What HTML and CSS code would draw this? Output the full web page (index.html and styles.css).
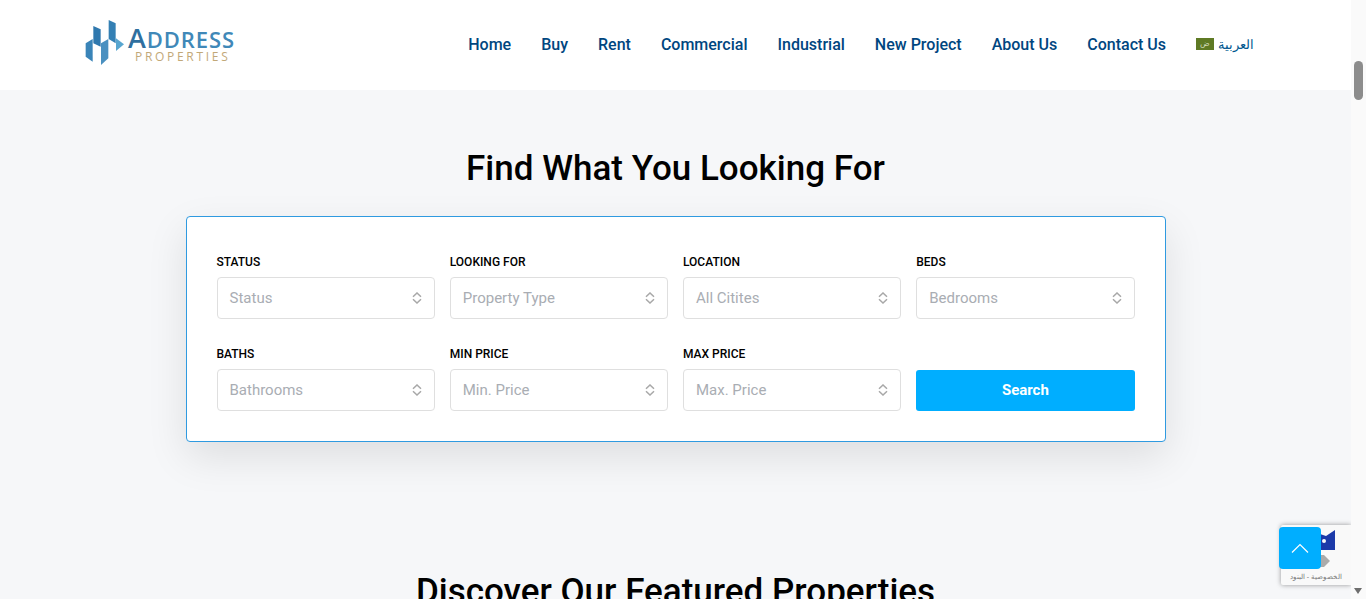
FILE: index.html
```html
<!DOCTYPE html>
<html lang="en">
<head>
    <meta charset="UTF-8">
    <meta name="viewport" content="width=device-width, initial-scale=1.0">
    <title>Address Properties</title>
    <link rel="stylesheet" href="styles.css">
</head>
<body>
    <div class="page">
        <header class="header">
            <a class="logo" href="#">
                <svg class="logo-mark" width="50" height="55" viewBox="0 0 150 165">
                    <polygon points="17,85 38,72 38,140 17,125" fill="#3a84b8"/>
                    <polygon points="40,33 62,43 62,95 40,85" fill="#2f78ae"/>
                    <polygon points="63,85 85,72 85,130 63,150" fill="#4a90c0"/>
                    <polygon points="86,15 107,25 107,85 86,72" fill="#3480b4"/>
                    <polygon points="108,70 132,88 108,108" fill="#58a6d0"/>
                </svg>
                <span class="logo-text">
                    <span class="logo-name"><span class="logo-cap">A</span>DDRESS</span>
                    <span class="logo-sub">PROPERTIES</span>
                </span>
            </a>
            <nav class="nav">
                <a href="#">Home</a>
                <a href="#">Buy</a>
                <a href="#">Rent</a>
                <a href="#">Commercial</a>
                <a href="#">Industrial</a>
                <a href="#">New Project</a>
                <a href="#">About Us</a>
                <a href="#">Contact Us</a>
                <a class="lang" href="#"><span class="flag">ض</span><span dir="rtl">العربية</span></a>
            </nav>
        </header>

        <main class="main">
            <h1 class="title">Find What You Looking For</h1>
            <form class="search-card">
                <div class="field">
                    <label>STATUS</label>
                    <div class="select"><span>Status</span><svg class="updown" width="10" height="12" viewBox="0 0 10 12"><path d="M1 4.8 5 1 9 4.8M1 7.2 5 11 9 7.2"/></svg></div>
                </div>
                <div class="field">
                    <label>LOOKING FOR</label>
                    <div class="select"><span>Property Type</span><svg class="updown" width="10" height="12" viewBox="0 0 10 12"><path d="M1 4.8 5 1 9 4.8M1 7.2 5 11 9 7.2"/></svg></div>
                </div>
                <div class="field">
                    <label>LOCATION</label>
                    <div class="select"><span>All Citites</span><svg class="updown" width="10" height="12" viewBox="0 0 10 12"><path d="M1 4.8 5 1 9 4.8M1 7.2 5 11 9 7.2"/></svg></div>
                </div>
                <div class="field">
                    <label>BEDS</label>
                    <div class="select"><span>Bedrooms</span><svg class="updown" width="10" height="12" viewBox="0 0 10 12"><path d="M1 4.8 5 1 9 4.8M1 7.2 5 11 9 7.2"/></svg></div>
                </div>
                <div class="field">
                    <label>BATHS</label>
                    <div class="select"><span>Bathrooms</span><svg class="updown" width="10" height="12" viewBox="0 0 10 12"><path d="M1 4.8 5 1 9 4.8M1 7.2 5 11 9 7.2"/></svg></div>
                </div>
                <div class="field">
                    <label>MIN PRICE</label>
                    <div class="select"><span>Min. Price</span><svg class="updown" width="10" height="12" viewBox="0 0 10 12"><path d="M1 4.8 5 1 9 4.8M1 7.2 5 11 9 7.2"/></svg></div>
                </div>
                <div class="field">
                    <label>MAX PRICE</label>
                    <div class="select"><span>Max. Price</span><svg class="updown" width="10" height="12" viewBox="0 0 10 12"><path d="M1 4.8 5 1 9 4.8M1 7.2 5 11 9 7.2"/></svg></div>
                </div>
                <div class="field field-btn">
                    <button type="button" class="search-btn">Search</button>
                </div>
            </form>
            <h2 class="title title-second">Discover Our Featured Properties</h2>
        </main>

        <div class="recaptcha">
            <svg class="recaptcha-logo" width="44" height="44" viewBox="0 0 44 44">
                <path d="M20 7 32 11 41 5V25H20z" fill="#1c3aa9"/>
                <circle cx="30" cy="16" r="2" fill="#f9f9f9"/>
                <path d="M20 30H30L36 36 30 42H20z" fill="#ababab"/>
            </svg>
            <div class="recaptcha-text" dir="rtl">الخصوصية - البنود</div>
        </div>
        <a class="to-top" href="#">
            <svg width="18" height="10" viewBox="0 0 18 10"><path d="M1 9.5 9 1.5l8 8"/></svg>
        </a>
    </div>
    <div class="scrollbar">
        <div class="scroll-thumb"></div>
        <div class="scroll-down"></div>
    </div>
</body>
</html>
```

FILE: styles.css
```css
html, body {
    margin: 0;
    height: 100%;
    overflow: hidden;
}

body {
    display: flex;
    font-family: Roboto, "Liberation Sans", sans-serif;
    background-color: #f6f7f9;
}

.page {
    position: relative;
    flex: 1;
    min-width: 0;
    height: 599px;
    overflow: hidden;
}

/* Header */
.header {
    height: 90px;
    background-color: #fff;
    display: flex;
    align-items: center;
    justify-content: space-between;
    padding: 0 97px 0 80px;
}

.logo {
    display: flex;
    align-items: center;
    text-decoration: none;
    margin-top: -5px;
}

.logo-mark {
    margin-right: -2px;
}

.logo-text {
    display: flex;
    flex-direction: column;
    align-items: flex-start;
    margin-top: 6px;
}

.logo-name {
    font-family: "Open Sans", sans-serif;
    font-size: 22px;
    line-height: 22px;
    font-weight: 600;
    letter-spacing: 0.9px;
    color: #4088b8;
}

.logo-cap {
    font-size: 27px;
    line-height: 20px;
    color: #2f6f9f;
}

.logo-sub {
    font-family: "Open Sans", sans-serif;
    font-size: 12px;
    line-height: 13px;
    letter-spacing: 2.7px;
    margin-left: 7px;
    color: #c2a878;
}

.nav {
    display: flex;
    align-items: center;
    gap: 30px;
    margin-top: -2px;
}

.nav a {
    font-size: 16px;
    font-weight: 500;
    color: #00467f;
    text-decoration: none;
}

.nav .lang {
    display: flex;
    align-items: center;
    gap: 4px;
    font-family: "Liberation Sans", sans-serif;
    font-size: 13px;
    font-weight: 400;
    color: #00588f;
}

.flag {
    width: 18px;
    height: 12px;
    background-color: #5f7a24;
    color: #cfd8b8;
    font-size: 8px;
    line-height: 12px;
    text-align: center;
}

/* Search */
.main {
    display: flex;
    flex-direction: column;
    align-items: center;
}

.title {
    margin: 0;
    font-size: 35px;
    line-height: 40px;
    font-weight: 500;
    color: #000;
}

.main > .title:first-child {
    margin-top: 59px;
}

.search-card {
    box-sizing: border-box;
    width: 980px;
    height: 226px;
    margin-top: 27px;
    padding: 30px;
    background-color: #fff;
    border: 1px solid #2f9ae0;
    border-radius: 4px;
    box-shadow: 0 15px 40px rgba(0, 0, 0, 0.1);
    display: grid;
    grid-template-columns: repeat(4, 1fr);
    column-gap: 15px;
    row-gap: 20px;
    align-content: start;
}

.field {
    display: flex;
    flex-direction: column;
    padding-top: 6px;
}

.field label {
    font-size: 12px;
    line-height: 18px;
    font-weight: 500;
    color: #000;
    margin-bottom: 6px;
}

.select {
    box-sizing: border-box;
    height: 42px;
    display: flex;
    align-items: center;
    justify-content: space-between;
    padding: 0 12px;
    border: 1px solid #dfdfdf;
    border-radius: 4px;
    font-size: 15px;
    color: #a9adb3;
}

.updown {
    fill: none;
    stroke: #a8a8a8;
    stroke-width: 1.5;
}

.field-btn {
    justify-content: flex-end;
}

.search-btn {
    height: 41px;
    padding-bottom: 3px;
    border: none;
    border-radius: 3px;
    background-color: #00aeff;
    color: #fff;
    font-family: Roboto, sans-serif;
    font-size: 15px;
    font-weight: 700;
}

.title-second {
    margin-top: 130px;
}

/* Overlays */
.recaptcha {
    position: absolute;
    left: 1281px;
    top: 525px;
    width: 70px;
    height: 60px;
    background-color: #f9f9f9;
    box-shadow: 0 0 5px rgba(0, 0, 0, 0.4);
    border-radius: 2px 0 0 2px;
    overflow: hidden;
}

.recaptcha-logo {
    position: absolute;
    left: 13px;
    top: 0;
}

.recaptcha-text {
    position: absolute;
    left: 0;
    right: 0;
    bottom: 2px;
    font-family: "Liberation Sans", sans-serif;
    font-size: 7px;
    line-height: 12px;
    text-align: center;
    color: #777;
}

.to-top {
    position: absolute;
    left: 1279px;
    top: 527px;
    width: 42px;
    height: 42px;
    border-radius: 4px;
    background-color: #00aeff;
    display: flex;
    align-items: center;
    justify-content: center;
}

.to-top path {
    fill: none;
    stroke: #fff;
    stroke-width: 1.2;
}

/* Browser scrollbar */
.scrollbar {
    position: relative;
    flex: 0 0 15px;
    height: 599px;
    background-color: #fafafa;
}

.scroll-thumb {
    position: absolute;
    left: 3px;
    top: 61px;
    width: 9px;
    height: 39px;
    border-radius: 5px;
    background-color: #8c8c8c;
}

.scroll-down {
    position: absolute;
    left: 3px;
    top: 588px;
    border-left: 4.5px solid transparent;
    border-right: 4.5px solid transparent;
    border-top: 6px solid #6e6e6e;
}
```
